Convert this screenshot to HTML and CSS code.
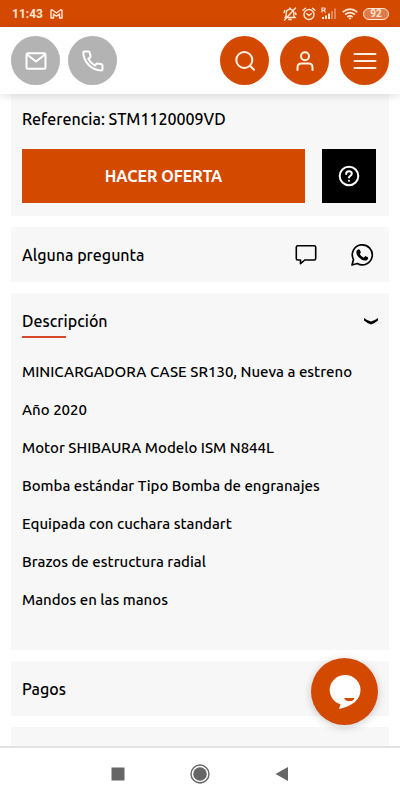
FILE: index.html
```html
<!DOCTYPE html>
<html lang="es">
<head>
<meta charset="utf-8">
<meta name="viewport" content="width=device-width, initial-scale=1">
<title>STM1120009VD</title>
<link rel="stylesheet" href="styles.css">
</head>
<body>
<div class="status">
  <span class="clock">11:43</span>
  <svg class="gmail" width="13" height="10" viewBox="0 0 13 10" fill="none" stroke="currentColor" stroke-linejoin="round"><path d="M1 9V1.5Q1.5.5 2.5 1L6.500 4 10.500 1Q11.500.5 12 1.500V9H9.500V5L6.500 7.300 3.500 5V9Z" stroke-width="1.400"/></svg>
  <div class="indicators">
    <svg width="14" height="14" viewBox="0 0 14 14" fill="none" stroke="currentColor" stroke-width="1.400" stroke-linecap="round"><path d="M2 10.500h10L10.800 9V5.500Q10.500 3 7.800 2.400L7 1.300 6.200 2.400Q3.200 3 3.200 5.800V9L2 10.500M5.800 12.500h2.400M1.500 13 12.500 1M1 5.500 1.800 3.500M12.500 6l.5 1.500"/></svg>
    <svg width="14" height="14" viewBox="0 0 14 14" fill="none" stroke="currentColor" stroke-width="1.400" stroke-linecap="round"><circle cx="7" cy="7.500" r="5"/><path d="M1 3.200 3.500 1.200M13 3.200 10.500 1.200M4.800 6.800 7 8.500 9.300 6.800"/></svg>
    <svg width="16" height="13" viewBox="0 0 16 13" fill="currentColor"><path d="M1 5.500V1H3.200Q4.500 1.200 4 2.600L3 3.300 4.500 5.500M1 3.300H3" fill="none" stroke="currentColor" stroke-width="1.200"/><path d="M1 10h2v2H1zM4 8.500h2V12H4zM7 6.500h2V12H7z"/><path d="M10 4h2v8h-2zM13 1.500h2V12h-2z" opacity=".4"/></svg>
    <svg width="16" height="12" viewBox="0 0 16 12" fill="none" stroke="currentColor" stroke-width="1.700"><path d="M.7 4.200Q8-2 15.300 4.200M3 6.700Q8 2.500 13 6.700M5.300 9Q8 6.800 10.700 9"/><path d="M6.500 10Q8 8.800 9.500 10L8 11.700Z" fill="currentColor" stroke="none"/></svg>
    <span class="battery">92</span>
  </div>
</div>
<header class="toolbar">
  <a class="round muted" href="#correo" aria-label="Correo"><svg width="22" height="22" viewBox="0 0 22 22"><rect x="1.500" y="3.200" width="19" height="15.600" rx="1.500"/><path d="M2 4.500 11 11.500 20 4.500"/></svg></a>
  <a class="round muted" href="#telefono" aria-label="Teléfono"><svg width="22" height="22" viewBox="0 0 22 22"><path d="M2 1.500H6.500Q7.500 1.500 7.700 2.500L8.500 6Q8.600 7 7.800 7.600L6.300 8.800Q8.500 13.300 13 15.600L14.300 14Q15 13.200 16 13.500L19.500 14.300Q20.500 14.600 20.500 15.500V19Q20.500 20.500 19 20.500Q12 20 7 15.200Q1.500 9.800 1.300 2.500Q1.300 1.500 2 1.500Z"/></svg></a>
  <button class="round push" aria-label="Buscar"><svg width="22" height="22" viewBox="0 0 22 22"><circle cx="10.300" cy="10" r="8"/><path d="M16 15.800 20 19.800"/></svg></button>
  <button class="round" aria-label="Cuenta"><svg width="22" height="22" viewBox="0 0 22 22"><circle cx="11" cy="6.200" r="4"/><path d="M3.500 20V17.500Q3.500 13.500 7.500 13.500H14.500Q18.500 13.500 18.500 17.500V20"/></svg></button>
  <button class="round" aria-label="Menú"><svg width="24" height="22" viewBox="0 0 24 22"><path d="M1.500 4h21M1.500 11h21M1.500 18h21"/></svg></button>
</header>
<main class="content">
  <section class="card offer">
    <p class="reference">Referencia: STM1120009VD</p>
    <div class="actions">
      <button class="offer-button">HACER OFERTA</button>
      <button class="help" aria-label="Ayuda"><svg width="22" height="22" viewBox="0 0 22 22" fill="none" stroke="currentColor" stroke-width="2" stroke-linecap="round"><circle cx="11" cy="11" r="9.300"/><path d="M8.200 9Q8.200 6.300 11 6.300T13.800 8.800Q13.800 10 12.300 10.800Q11 11.500 11 12.500"/><path d="M11 15.700v.1"/></svg></button>
    </div>
  </section>
  <section class="card row">
    <h2 class="title">Alguna pregunta</h2>
    <div class="contact">
      <a href="#chat" aria-label="Mensaje"><svg width="22" height="22" viewBox="0 0 22 22" fill="none" stroke="currentColor" stroke-width="1.600" stroke-linejoin="round"><path d="M2.800 1.800H19.200Q20.700 1.800 20.700 3.300V14.500Q20.700 16 19.200 16H9.800L5.500 19.700V16H2.800Q1.300 16 1.300 14.500V3.300Q1.300 1.800 2.800 1.800Z"/></svg></a>
      <a href="#whatsapp" aria-label="WhatsApp"><svg width="24" height="24" viewBox="0 0 24 24"><path d="M2 22 3.500 16.600A10 10 0 1 1 7.300 20.500Z" fill="none" stroke="currentColor" stroke-width="1.700" stroke-linejoin="round"/><path d="M8 6.500H9.300Q9.700 6.600 9.900 7L10.800 9.200Q10.900 9.500 10.600 9.900L9.700 11Q11.200 13.600 13.800 14.700L15 13.300Q15.300 13 15.700 13.200L17.900 14.300Q18.200 14.500 18.100 15Q17.700 17.600 14.800 17.600Q11.400 17.300 8.500 14Q6.300 11.500 6.300 9.300Q6.300 7.300 8 6.500Z" fill="currentColor"/></svg></a>
    </div>
  </section>
  <details class="card" open>
    <summary class="row"><h2 class="title underlined">Descripción</h2><svg class="chevron" width="14" height="8" viewBox="0 0 14 8"><path d="M0 1Q3.500 3.800 7 4.500 10.500 3.800 14 1V3.500Q10.500 6.500 7 7.500 3.500 6.500 0 3.500Z"/></svg></summary>
    <div class="description">
      <p>MINICARGADORA CASE SR130, Nueva a estreno</p>
      <p>Año 2020</p>
      <p>Motor SHIBAURA Modelo ISM N844L</p>
      <p>Bomba estándar Tipo Bomba de engranajes</p>
      <p>Equipada con cuchara standart</p>
      <p>Brazos de estructura radial</p>
      <p>Mandos en las manos</p>
    </div>
  </details>
  <section class="card row"><h2 class="title">Pagos</h2></section>
  <section class="card row"></section>
</main>
<button class="chat" aria-label="Abrir chat"><svg width="34" height="36" viewBox="0 0 34 36"><path d="M17 1A15.500 14.800 0 0 1 32.500 16C32.500 26 24 32 11 35L12.500 30.300A15.500 15 0 0 1 17 1Z" fill="#fff"/><path d="M16 24H26.500Q25.500 27.300 21.500 27.300T16 24Z" fill="#d34900"/></svg></button>
<nav class="system">
  <button aria-label="Recientes"><svg width="22" height="22" viewBox="0 0 22 22"><path d="M4.500 4.500h13v13h-13z"/></svg></button>
  <button aria-label="Inicio"><svg width="22" height="22" viewBox="0 0 22 22"><circle cx="11" cy="11" r="9" fill="none" stroke="currentColor" stroke-width="1.400"/><circle cx="11" cy="11" r="6.800"/></svg></button>
  <button aria-label="Atrás"><svg width="22" height="22" viewBox="0 0 22 22"><path d="M4.500 11 17 4V18Z"/></svg></button>
</nav>
</body>
</html>
```
FILE: styles.css
```css
* { box-sizing: border-box; }
body {
  margin: 0;
  height: 100vh;
  display: flex;
  flex-direction: column;
  background: #fff;
  color: #000;
  font-family: Ubuntu, "Noto Sans", sans-serif;
}
button { border: 0; padding: 0; font: inherit; cursor: pointer; }
a { color: inherit; }
svg { display: block; }
p, h2 { margin: 0; }

.status {
  flex: none;
  display: flex;
  align-items: center;
  height: 27px;
  padding: 0 11px 0 12px;
  background: #d34900;
  color: #ffe6d2;
  font-family: Roboto, sans-serif;
}
.clock { font-size: 12px; font-weight: 700; }
.gmail { margin-left: 7px; }
.indicators { display: flex; align-items: center; gap: 5px; margin-left: auto; }
.battery {
  width: 26px;
  height: 12px;
  border: 1px solid currentColor;
  border-radius: 6px;
  background: #e07a48;
  font-size: 10px;
  font-weight: 700;
  line-height: 10px;
  text-align: center;
}

.toolbar {
  flex: none;
  z-index: 1;
  display: flex;
  align-items: center;
  gap: 11px;
  padding: 9px 11px;
  background: #fff;
  box-shadow: 0 2px 8px rgba(0, 0, 0, .12);
}
.round {
  display: grid;
  place-items: center;
  width: 49px;
  height: 49px;
  border-radius: 50%;
  background: #d34900;
  color: #fff0e4;
}
.round svg {
  fill: none;
  stroke: currentColor;
  stroke-width: 2;
  stroke-linecap: round;
  stroke-linejoin: round;
}
.round.muted { background: #b3b3b3; color: #fff; margin-right: -3px; }
.round.push { margin-left: auto; }

.content {
  flex: 1;
  min-height: 0;
  overflow: hidden;
  display: flex;
  flex-direction: column;
  gap: 11px;
  padding: 0 11px;
}
.card { flex: none; padding: 0 11px; background: #f7f7f7; }
.row { display: flex; align-items: center; justify-content: space-between; min-height: 55px; }
.title { font-size: 16px; font-weight: 500; line-height: 24px; }

.offer { padding-top: 15px; padding-bottom: 13px; }
.reference { font-size: 16px; font-weight: 500; line-height: 20px; }
.actions { display: flex; gap: 17px; margin-top: 20px; padding-right: 2px; }
.offer-button {
  flex: 1;
  height: 54px;
  background: #d34900;
  color: #fff;
  font-size: 16px;
  font-weight: 700;
}
.help {
  display: grid;
  place-items: center;
  width: 54px;
  background: #000;
  color: #fff;
}
.contact { display: flex; gap: 33px; padding-right: 4px; align-items: center; }

summary { list-style: none; cursor: pointer; }
.underlined::after {
  content: "";
  display: block;
  width: 44px;
  height: 2px;
  margin-top: 3px;
  margin-bottom: -5px;
  background: #d8492a;
}
.description {
  display: grid;
  gap: 18px;
  padding: 14px 0 40px;
  font-size: 15px;
  font-weight: 500;
  line-height: 20px;
}

.chat {
  position: fixed;
  right: 22px;
  bottom: 75px;
  z-index: 2;
  display: grid;
  place-items: center;
  width: 67px;
  height: 67px;
  border-radius: 50%;
  background: #d34900;
  box-shadow: 0 2px 8px rgba(0, 0, 0, .2);
}
.system {
  flex: none;
  z-index: 1;
  display: flex;
  justify-content: center;
  gap: 60px;
  height: 54px;
  border-top: 2px solid #e2e2e2;
  background: #fff;
}
.system button { background: none; color: #666; }
.system svg { fill: currentColor; }
```
